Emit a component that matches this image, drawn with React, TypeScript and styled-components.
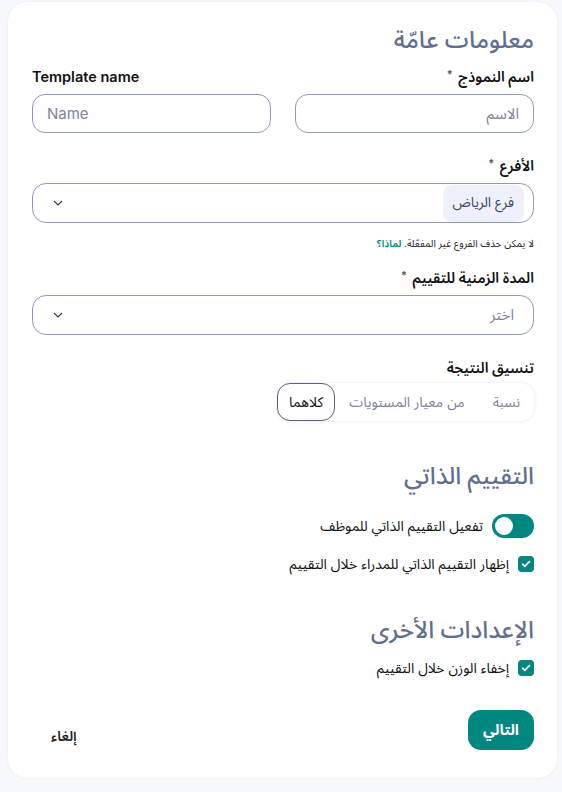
import React from "react";
import styled, { createGlobalStyle } from "styled-components";

const Global = createGlobalStyle`
  html, body { margin: 0; padding: 0; background: #f6f8fc; }
  body { font-family: Inter, "Noto Sans Arabic", "Noto Kufi Arabic", "DejaVu Sans", sans-serif; }
  * { box-sizing: border-box; }
`;

const teal = "#00877f";
const borderCol = "#8e9ab6";

const Page = styled.div`
  padding: 2px 5px 14px 8px;
`;

const Card = styled.div`
  direction: rtl;
  background: #fff;
  border-radius: 20px;
  box-shadow: 0 0 3px rgba(120, 135, 170, 0.12);
  padding: 22px 23px 28px 24px;
  display: flex;
  flex-direction: column;
`;

const SectionTitle = styled.h2<{ $top?: number }>`
  margin: ${(p) => p.$top || 0}px 0 0;
  font-size: 24px;
  font-weight: 500;
  color: #5f6f91;
  line-height: 32px;
  height: 32px;
`;

const Row = styled.div`
  display: grid;
  grid-template-columns: minmax(0, 1fr) minmax(0, 1fr);
  column-gap: 24px;
  margin-top: 10px;
`;

const Field = styled.div<{ $top?: number }>`
  display: flex;
  flex-direction: column;
  min-width: 0;
  margin-top: ${(p) => p.$top || 0}px;
`;

const Label = styled.label<{ $ltr?: boolean }>`
  font-size: 14.5px;
  font-weight: 600;
  color: #111;
  line-height: 22px;
  height: 22px;
  margin-bottom: 6px;
  direction: ${(p) => (p.$ltr ? "ltr" : "rtl")};
  text-align: ${(p) => (p.$ltr ? "left" : "right")};
  sup {
    font-size: 11px;
    color: #555;
    margin-right: 2px;
    line-height: 0;
    vertical-align: 4px;
  }
`;

const Input = styled.input<{ $ltr?: boolean }>`
  width: 100%;
  height: 39px;
  border: 1px solid ${borderCol};
  border-radius: 13px;
  padding: 0 14px;
  font: inherit;
  font-size: 15px;
  color: #333;
  direction: ${(p) => (p.$ltr ? "ltr" : "rtl")};
  outline: none;
  &::placeholder { color: #7b849a; }
`;

const Select = styled.div`
  height: 40px;
  border: 1px solid ${borderCol};
  border-radius: 14px;
  padding: 0 9px 0 19px;
  display: flex;
  align-items: center;
  justify-content: space-between;
`;

const Placeholder = styled.span`
  font-size: 15px;
  color: #7b849a;
  padding-right: 10px;
`;

const Chip = styled.span`
  background: #eef1fb;
  border-radius: 9px;
  padding: 3px 10px 5px;
  font-size: 14px;
  color: #3d4a66;
`;

const Chevron = styled.svg`
  width: 12px;
  height: 12px;
`;

const Hint = styled.p`
  margin: 12px 0 0;
  font-size: 10px;
  color: #222;
  line-height: 16px;
  a { color: ${teal}; text-decoration: none; font-weight: 600; }
`;

const Segmented = styled.div`
  align-self: flex-start;
  display: flex;
  align-items: center;
  border-radius: 14px;
  box-shadow: 0 0 4px rgba(110, 125, 170, 0.2);
  margin-top: -2px;
`;

const Seg = styled.button<{ $active?: boolean }>`
  font: inherit;
  font-size: 14px;
  font-weight: 400;
  line-height: 20px;
  background: transparent;
  border: 1px solid ${(p) => (p.$active ? "#56627f" : "transparent")};
  border-radius: 13px;
  height: 38px;
  padding: 0 ${(p) => (p.$active ? 11 : 13)}px;
  color: ${(p) => (p.$active ? "#111" : "#7b849a")};
`;

const OptionRow = styled.div<{ $top?: number }>`
  display: flex;
  align-items: center;
  gap: 9px;
  height: 20px;
  line-height: 20px;
  margin-top: ${(p) => p.$top || 0}px;
  font-size: 14px;
  color: #111;
`;

const Toggle = styled.span`
  flex: none;
  width: 42px;
  height: 24px;
  border-radius: 12px;
  background: ${teal};
  position: relative;
  &::after {
    content: "";
    position: absolute;
    left: 3px;
    top: 3px;
    width: 18px;
    height: 18px;
    border-radius: 50%;
    background: #fff;
  }
`;

const Check = styled.span`
  flex: none;
  width: 16px;
  height: 16px;
  border-radius: 4px;
  background: ${teal};
  display: flex;
  align-items: center;
  justify-content: center;
  svg { width: 10px; height: 10px; }
`;

const Footer = styled.div`
  display: flex;
  align-items: center;
  justify-content: space-between;
  margin-top: 32px;
`;

const Primary = styled.button`
  font: inherit;
  font-size: 15px;
  font-weight: 700;
  line-height: 20px;
  background: ${teal};
  color: #fff;
  border: none;
  border-radius: 13px;
  height: 40px;
  width: 66px;
`;

const Ghost = styled.button`
  font: inherit;
  font-size: 14px;
  font-weight: 600;
  line-height: 20px;
  color: #222;
  background: none;
  border: none;
  margin-left: 13px;
  margin-top: 12px;
`;

const Arrow = () => (
  <Chevron viewBox="0 0 12 12">
    <path d="M2 4l4 4 4-4" fill="none" stroke="#3b3260" strokeWidth="1.2" />
  </Chevron>
);

const Tick = () => (
  <svg viewBox="0 0 10 10">
    <path d="M1.6 5.2l2.2 2.2 4.6-4.8" fill="none" stroke="#fff" strokeWidth="1.8" strokeLinecap="round" strokeLinejoin="round" />
  </svg>
);

export default function App() {
  return (
    <Page>
      <Global />
      <Card>
        <SectionTitle>معلومات عامّة</SectionTitle>
        <Row>
          <Field>
            <Label>
              اسم النموذج <sup>*</sup>
            </Label>
            <Input placeholder="الاسم" />
          </Field>
          <Field>
            <Label $ltr>Template name</Label>
            <Input $ltr placeholder="Name" />
          </Field>
        </Row>

        <Field $top={22}>
          <Label>
            الأفرع <sup>*</sup>
          </Label>
          <Select>
            <Chip>فرع الرياض</Chip>
            <Arrow />
          </Select>
          <Hint>
            لا يمكن حذف الفروع غير المفعّلة. <a href="#">لماذا؟</a>
          </Hint>
        </Field>

        <Field $top={16}>
          <Label>
            المدة الزمنية للتقييم <sup>*</sup>
          </Label>
          <Select>
            <Placeholder>اختر</Placeholder>
            <Arrow />
          </Select>
        </Field>

        <Field $top={22}>
          <Label>تنسيق النتيجة</Label>
          <Segmented>
            <Seg>نسبة</Seg>
            <Seg>من معيار المستويات</Seg>
            <Seg $active>كلاهما</Seg>
          </Segmented>
        </Field>

        <SectionTitle $top={39}>التقييم الذاتي</SectionTitle>
        <OptionRow $top={24}>
          <Toggle />
          <span>تفعيل التقييم الذاتي للموظف</span>
        </OptionRow>
        <OptionRow $top={18}>
          <Check>
            <Tick />
          </Check>
          <span>إظهار التقييم الذاتي للمدراء خلال التقييم</span>
        </OptionRow>

        <SectionTitle $top={40}>الإعدادات الأخرى</SectionTitle>
        <OptionRow $top={12}>
          <Check>
            <Tick />
          </Check>
          <span>إخفاء الوزن خلال التقييم</span>
        </OptionRow>

        <Footer>
          <Primary>التالي</Primary>
          <Ghost>إلغاء</Ghost>
        </Footer>
      </Card>
    </Page>
  );
}
